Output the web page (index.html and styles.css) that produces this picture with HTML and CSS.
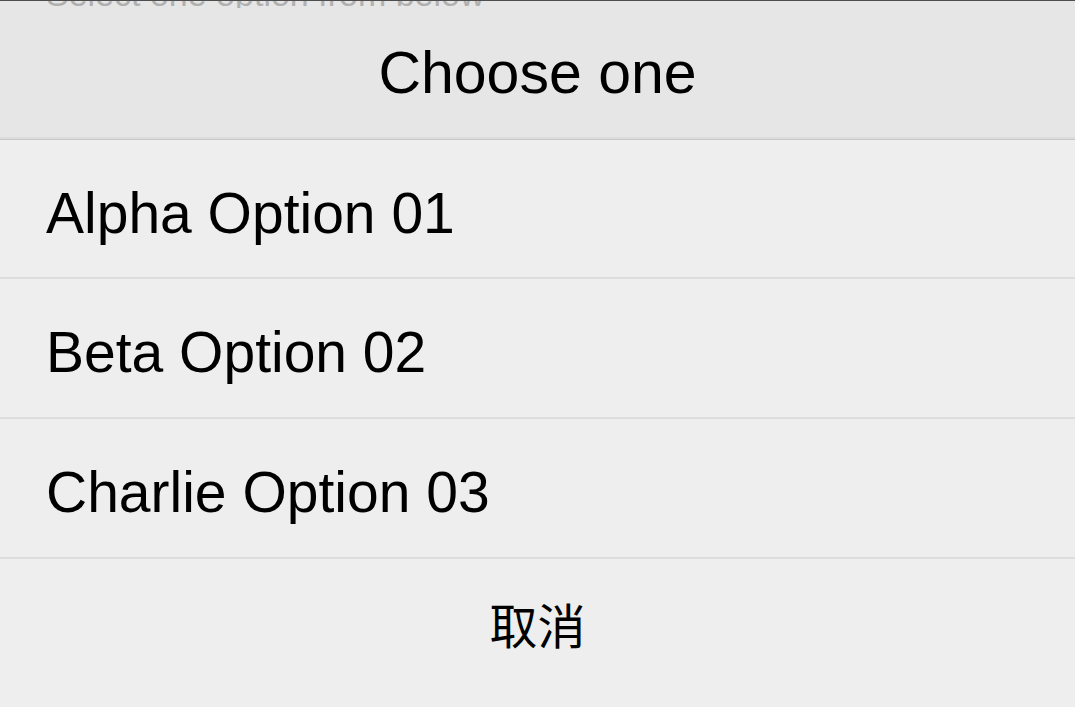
FILE: index.html
```html
<!DOCTYPE html>
<html lang="zh">
<head>
<meta charset="utf-8">
<title>Choose one</title>
<link rel="stylesheet" href="styles.css">
</head>
<body>
<div class="sheet">
  <div class="peek"><span class="peek-text">Select one option from below</span></div>
  <div class="title">Choose one</div>
  <div class="list">
    <div class="option">Alpha Option 01</div>
    <div class="option">Beta Option 02</div>
    <div class="option">Charlie Option 03</div>
  </div>
  <div class="cancel">取消</div>
</div>
</body>
</html>
```

FILE: styles.css
```css
html, body {
  margin: 0;
  padding: 0;
  background: #eeeeee;
}
body {
  font-family: "Liberation Sans", Arial, "Noto Sans CJK SC", sans-serif;
  color: #000;
  width: 1075px;
  height: 707px;
  overflow: hidden;
}
.sheet {
  display: flex;
  flex-direction: column;
}
.peek {
  height: 7px;
  border-top: 1px solid #4e4e4e;
  background: #e6e6e6;
  overflow: hidden;
  padding-left: 46px;
}
.peek-text {
  display: block;
  font-size: 34px;
  line-height: 40px;
  margin-top: -27px;
  color: #b0b0b0;
  white-space: nowrap;
}
.title {
  height: 131px;
  background: #e6e6e6;
  border-bottom: 2px solid #dcdcdc;
  display: flex;
  align-items: center;
  justify-content: center;
  font-size: 59px;
  padding-top: 1px;
  box-sizing: border-box;
}
.list {
  border-top: 1px solid #c8c8c8;
  display: flex;
  flex-direction: column;
}
.option {
  border-bottom: 2px solid #dddddd;
  display: flex;
  align-items: center;
  padding-left: 46px;
  font-size: 57px;
  padding-top: 8px;
  height: 130px;
}
.option:first-child {
  height: 129px;
}
.cancel {
  height: 128px;
  display: flex;
  align-items: center;
  justify-content: center;
  font-family: "Noto Sans CJK SC", sans-serif;
  font-size: 48px;
}
```
